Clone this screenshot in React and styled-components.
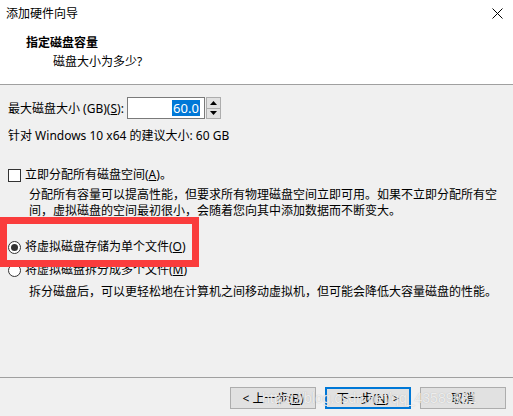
import React from 'react'
import styled, { createGlobalStyle } from 'styled-components'

const Global = createGlobalStyle`
  html, body { margin: 0; padding: 0; }
  body {
    width: 513px;
    height: 416px;
    overflow: hidden;
    font-family: "Noto Sans", "Noto Sans CJK SC", sans-serif;
    font-size: 12px;
    color: #000;
    background: #f0f0f0;
  }
`

function App() {
  return (
    <Window>
      <Global />
      <Header>
        <TitleBar>
          <Title>添加硬件向导</Title>
          <Close>
            <svg width="11" height="11" viewBox="0 0 11 11">
              <path d="M0.5 0.5 L10.5 10.5 M10.5 0.5 L0.5 10.5" stroke="#000" strokeWidth="1" />
            </svg>
          </Close>
        </TitleBar>
        <Heading>指定磁盘容量</Heading>
        <SubHeading>磁盘大小为多少?</SubHeading>
      </Header>

      <Body>
        <SizeRow>
          <span>最大磁盘大小 (GB)(<U>S</U>):</span>
          <Spin>
            <NumberBox><Selected>60.0</Selected></NumberBox>
            <Arrows>
              <ArrowBtn>
                <svg width="7" height="4" viewBox="0 0 7 4"><path d="M3.5 0 L7 4 L0 4 Z" fill="#000" /></svg>
              </ArrowBtn>
              <ArrowBtn>
                <svg width="7" height="4" viewBox="0 0 7 4"><path d="M0 0 L7 0 L3.5 4 Z" fill="#000" /></svg>
              </ArrowBtn>
            </Arrows>
          </Spin>
        </SizeRow>
        <Hint>针对 Windows 10 x64 的建议大小: 60 GB</Hint>

        <Option $top={21}>
          <CheckBox />
          <span>立即分配所有磁盘空间(<U>A</U>)。</span>
        </Option>
        <Description $top={3}>
          分配所有容量可以提高性能，但要求所有物理磁盘空间立即可用。如果不立即分配所有空间，虚拟磁盘的空间最初很小，会随着您向其中添加数据而不断变大。
        </Description>

        <Marked>
          <Option $top={0}>
            <Radio $checked />
            <span>将虚拟磁盘存储为单个文件(<U>O</U>)</span>
          </Option>
          <RedFrame />
        </Marked>
        <Option $top={5}>
          <Radio />
          <span>将虚拟磁盘拆分成多个文件(<U>M</U>)</span>
        </Option>
        <Description $top={5}>
          拆分磁盘后，可以更轻松地在计算机之间移动虚拟机，但可能会降低大容量磁盘的性能。
        </Description>
      </Body>

      <Footer>
        <Button>&lt; 上一步(<U>B</U>)</Button>
        <Button $primary>下一步(<U>N</U>) &gt;</Button>
        <Button>取消</Button>
        <Watermark>https://blog.csdn.net/qq_43589881</Watermark>
      </Footer>
    </Window>
  )
}

export default App

const Window = styled.div`
width:513px;
height:416px;
display:flex;
flex-direction:column;
background:#f0f0f0;
`

const Header = styled.div`
background:#fff;
height:84px;
border-bottom:1px solid #a0a0a0;
box-sizing:content-box;
`

const TitleBar = styled.div`
height:26px;
display:flex;
align-items:center;
justify-content:space-between;
padding:0 10px 0 6px;
`

const Title = styled.div`
font-size:12px;
color:#000;
`

const Close = styled.div`
display:flex;
`

const Heading = styled.div`
margin:8px 0 0 26px;
font-weight:bold;
line-height:18px;
`

const SubHeading = styled.div`
margin:1px 0 0 53px;
line-height:18px;
`

const Body = styled.div`
flex:1;
padding:12px 0 0 8px;
display:flex;
flex-direction:column;
`

const SizeRow = styled.div`
display:flex;
align-items:center;
gap:3px;
height:22px;
`

const U = styled.span`
text-decoration:underline;
`

const Spin = styled.div`
display:flex;
align-items:stretch;
height:22px;
`

const NumberBox = styled.div`
width:78px;
border:1px solid #7a7a7a;
background:#fff;
display:flex;
align-items:center;
justify-content:flex-end;
padding-right:4px;
box-sizing:border-box;
`

const Selected = styled.span`
background:#0078d7;
color:#fff;
font-size:13px;
line-height:16px;
padding:0 1px;
`

const Arrows = styled.div`
width:15px;
margin-left:1px;
display:flex;
flex-direction:column;
border:1px solid #adadad;
box-sizing:border-box;
background:#e1e1e1;
`

const ArrowBtn = styled.div`
flex:1;
display:flex;
align-items:center;
justify-content:center;
& + & { border-top:1px solid #adadad; }
`

const Hint = styled.div`
margin-top:8px;
line-height:18px;
`

const Option = styled.div`
display:flex;
align-items:center;
gap:4px;
margin-top:${p => p.$top}px;
line-height:18px;
`

const CheckBox = styled.span`
width:13px;
height:13px;
border:1px solid #333;
background:#fff;
box-sizing:border-box;
`

const Radio = styled.span`
width:13px;
height:13px;
border:1px solid #333;
border-radius:50%;
background:#fff;
box-sizing:border-box;
display:flex;
align-items:center;
justify-content:center;
&::after {
  content:'';
  display:${p => (p.$checked ? 'block' : 'none')};
  width:7px;
  height:7px;
  border-radius:50%;
  background:#333;
}
`

const Description = styled.div`
margin:${p => p.$top}px 0 0 21px;
width:470px;
line-height:16px;
`

const Marked = styled.div`
position:relative;
margin-top:19px;
`

const RedFrame = styled.div`
position:absolute;
left:-8px;
top:-21px;
width:199px;
height:50px;
border:7px solid #fa3c3c;
box-sizing:border-box;
pointer-events:none;
`

const Footer = styled.div`
height:39px;
border-top:1px solid #a0a0a0;
display:flex;
align-items:flex-start;
justify-content:flex-end;
gap:9px;
padding:9px 7px 0 0;
box-sizing:border-box;
position:relative;
`

const Button = styled.div`
width:86px;
height:22px;
box-sizing:border-box;
background:#e1e1e1;
border:${p => (p.$primary ? '2px solid #0078d7' : '1px solid #adadad')};
display:flex;
align-items:center;
justify-content:center;
font-size:12px;
`

const Watermark = styled.div`
position:absolute;
left:262px;
top:10px;
font-family:"Liberation Sans", Arial, sans-serif;
font-size:14px;
line-height:20px;
color:rgba(255,255,255,0.75);
text-shadow:0 0 1px rgba(140,140,140,0.6);
pointer-events:none;
`
